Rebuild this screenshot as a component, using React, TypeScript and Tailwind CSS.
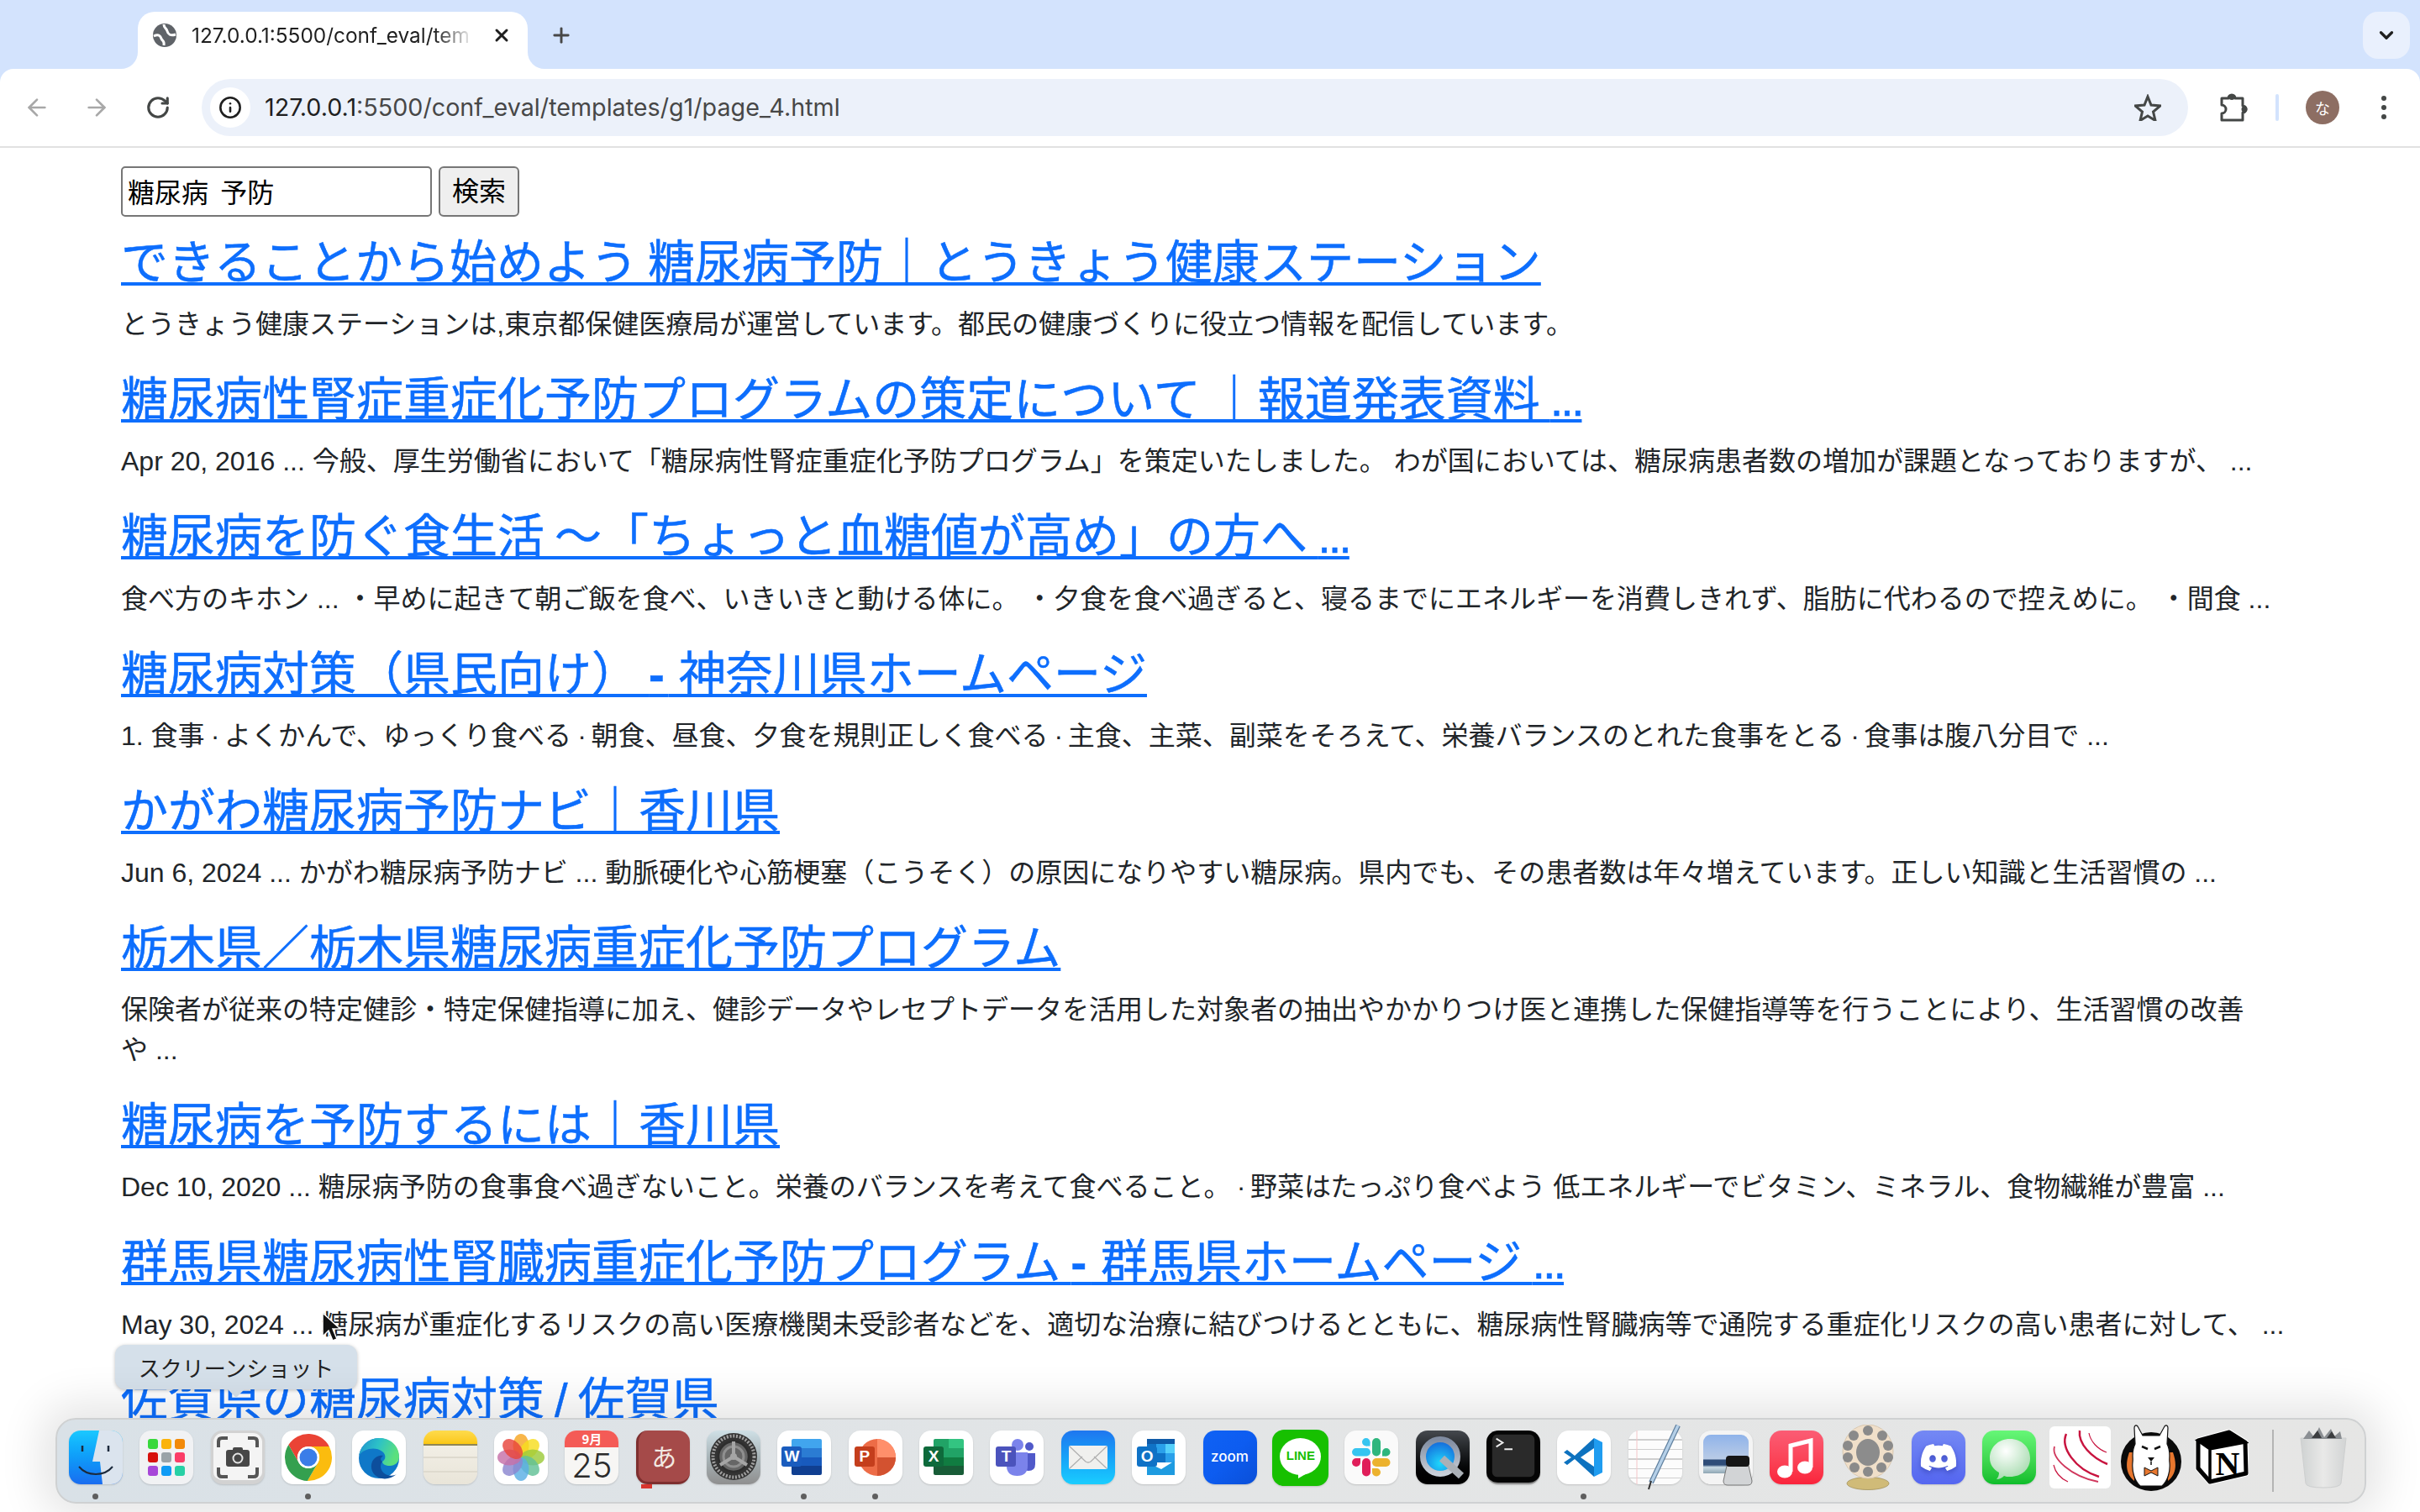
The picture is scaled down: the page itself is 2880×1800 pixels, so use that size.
import React from 'react';
import { ArrowLeft, ArrowRight, RotateCw, Info, Plus, X, ChevronDown } from 'lucide-react';
import { FaDiscord } from 'react-icons/fa';

const results = [
  {
    title: 'できることから始めよう 糖尿病予防｜とうきょう健康ステーション',
    text: 'とうきょう健康ステーションは,東京都保健医療局が運営しています。都民の健康づくりに役立つ情報を配信しています。',
  },
  {
    title: '糖尿病性腎症重症化予防プログラムの策定について ｜報道発表資料 ...',
    text: 'Apr 20, 2016 ... 今般、厚生労働省において「糖尿病性腎症重症化予防プログラム」を策定いたしました。 わが国においては、糖尿病患者数の増加が課題となっておりますが、 ...',
  },
  {
    title: '糖尿病を防ぐ食生活 ～「ちょっと血糖値が高め」の方へ ...',
    text: '食べ方のキホン ... ・早めに起きて朝ご飯を食べ、いきいきと動ける体に。 ・夕食を食べ過ぎると、寝るまでにエネルギーを消費しきれず、脂肪に代わるので控えめに。 ・間食 ...',
  },
  {
    title: '糖尿病対策（県民向け） - 神奈川県ホームページ',
    text: '1. 食事 · よくかんで、ゆっくり食べる · 朝食、昼食、夕食を規則正しく食べる · 主食、主菜、副菜をそろえて、栄養バランスのとれた食事をとる · 食事は腹八分目で ...',
  },
  {
    title: 'かがわ糖尿病予防ナビ｜香川県',
    text: 'Jun 6, 2024 ... かがわ糖尿病予防ナビ ... 動脈硬化や心筋梗塞（こうそく）の原因になりやすい糖尿病。県内でも、その患者数は年々増えています。正しい知識と生活習慣の ...',
  },
  {
    title: '栃木県／栃木県糖尿病重症化予防プログラム',
    text: '保険者が従来の特定健診・特定保健指導に加え、健診データやレセプトデータを活用した対象者の抽出やかかりつけ医と連携した保健指導等を行うことにより、生活習慣の改善\nや ...',
  },
  {
    title: '糖尿病を予防するには｜香川県',
    text: 'Dec 10, 2020 ... 糖尿病予防の食事食べ過ぎないこと。栄養のバランスを考えて食べること。 · 野菜はたっぷり食べよう 低エネルギーでビタミン、ミネラル、食物繊維が豊富 ...',
  },
  {
    title: '群馬県糖尿病性腎臓病重症化予防プログラム - 群馬県ホームページ ...',
    text: 'May 30, 2024 ... 糖尿病が重症化するリスクの高い医療機関未受診者などを、適切な治療に結びつけるとともに、糖尿病性腎臓病等で通院する重症化リスクの高い患者に対して、 ...',
  },
  { title: '佐賀県の糖尿病対策 / 佐賀県', text: '' },
];

const Tile = ({ className, children }: { className?: string; children?: React.ReactNode }) => (
  <div className={`relative w-[64px] h-[64px] rounded-[14px] overflow-hidden shrink-0 flex items-center justify-center shadow-[0_1px_2px_rgba(0,0,0,0.15)] ${className ?? ''}`}>{children}</div>
);

const Art = ({ children }: { children: React.ReactNode }) => (
  <svg viewBox="0 0 64 64" className="absolute inset-0 w-full h-full">{children}</svg>
);

const BadgeBox = ({ letter, className }: { letter: string; className: string }) => (
  <span className={`absolute left-[5px] top-[19px] w-[24px] h-[24px] rounded-[3px] text-white text-[19px] font-bold leading-[24px] text-center font-['Liberation_Sans',sans-serif] ${className}`}>{letter}</span>
);

const dockIcons: { key: string; dot?: boolean; node: React.ReactNode }[] = [
  {
    key: 'finder',
    dot: true,
    node: (
      <Tile className="bg-gradient-to-b from-[#1bc8ff] to-[#1a6cf0]">
        <Art>
          <path d="M36 0H64V64H40L37 37H28Z" fill="#dbe4ee" />
          <path d="M16 18v7M47 18v7" stroke="#1c2a3c" strokeWidth="2.500" />
          <path d="M12 43c10 12 30 12 40 0" fill="none" stroke="#1c2a3c" strokeWidth="2" />
        </Art>
      </Tile>
    ),
  },
  {
    key: 'launchpad',
    node: (
      <Tile className="bg-[#f1f2f4]">
        <div className="grid grid-cols-3 gap-[4px]">
          {['#39d83c', '#fbb30a', '#f28a0a', '#d7110d', '#9aa3a8', '#fb3d68', '#a746d8', '#0f9bf5', '#27d0a5'].map((c) => (
            <span key={c} className="w-[12px] h-[12px] rounded-[3px]" style={{ background: c }} />
          ))}
        </div>
      </Tile>
    ),
  },
  {
    key: 'screenshot',
    node: (
      <Tile className="bg-[#f4f4f4] border-[3px] border-b-[5px] border-[#d2d2d2]">
        <svg viewBox="0 0 64 64" className="absolute left-[-3px] top-[-3px] w-[64px] h-[64px]">
          <path d="M9 20v-7q0-4 4-4h7M44 9h7q4 0 4 4v7M55 44v7q0 4-4 4h-7M20 55h-7q-4 0-4-4v-7" fill="none" stroke="#555" strokeWidth="4" />
          <rect x="18" y="23" width="28" height="20" rx="3" fill="#474747" />
          <rect x="26" y="20" width="12" height="6" rx="2" fill="#474747" />
          <circle cx="32" cy="33" r="5.500" fill="none" stroke="#e5e5e5" strokeWidth="2" />
        </svg>
      </Tile>
    ),
  },
  {
    key: 'chrome',
    dot: true,
    node: (
      <Tile className="bg-white">
        <Art>
          <path d="M32 19H56.800A28 28 0 0 0 8.340 17.020L20.740 38.500A13 13 0 0 1 32 19Z" fill="#ea4335" />
          <path d="M43.260 38.500L30.860 59.980A28 28 0 0 0 56.800 19H32A13 13 0 0 1 43.260 38.500Z" fill="#fbbc0e" />
          <path d="M20.740 38.500L8.340 17.020A28 28 0 0 0 30.860 59.980L43.260 38.500A13 13 0 0 1 20.740 38.500Z" fill="#34a04f" />
          <circle cx="32" cy="32" r="13" fill="#fff" />
          <circle cx="32" cy="32" r="10.500" fill="#3b7de8" />
        </Art>
      </Tile>
    ),
  },
  {
    key: 'edge',
    node: (
      <Tile className="bg-white">
        <Art>
          <defs>
            <linearGradient id="edgeTop" x1="0" y1="0" x2="1" y2="0.300">
              <stop offset="0" stopColor="#1f8fce" />
              <stop offset="0.500" stopColor="#2cc1c8" />
              <stop offset="1" stopColor="#5be07d" />
            </linearGradient>
          </defs>
          <circle cx="32" cy="33" r="24" fill="#0f78c8" />
          <path d="M8 30C11 16 21 9 33 9c13 0 23 10 23 22 0 7-5 11-11 11-5 0-9-2-9-5 4-2 5-8 0-12-8-6-22-4-28 5z" fill="url(#edgeTop)" />
          <path d="M36 37c-4 5-2 13 6 16 4 1 8 1 11-1-6 5-14 7-21 4-8-3-11-12-8-19 3-6 9-8 13-7-3 2-4 5-1 7z" fill="#0d4e9c" />
        </Art>
      </Tile>
    ),
  },
  {
    key: 'notes',
    node: (
      <Tile className="bg-gradient-to-b from-[#f5f2ea] to-[#e9e5d9] flex-col justify-start">
        <div className="w-full h-[18px] shrink-0 bg-gradient-to-b from-[#fedb4b] to-[#fbc70d] border-b-2 border-[#8f8555]" />
        <div className="w-full h-[15px] shrink-0 border-b-2 border-[#dedace]" />
        <div className="w-full h-[17px] shrink-0 border-b-2 border-[#dedace]" />
      </Tile>
    ),
  },
  {
    key: 'photos',
    node: (
      <Tile className="bg-white">
        <Art>
          {([
            ['#f6a623', 0],
            ['#f7dd1e', 45],
            ['#9ccb3b', 90],
            ['#61c196', 135],
            ['#5aaee4', 180],
            ['#8b86cf', 225],
            ['#c670a8', 270],
            ['#e8453c', 315],
          ] as [string, number][]).map(([c, a]) => (
            <ellipse key={a} cx="32" cy="18" rx="9.500" ry="14" fill={c} opacity="0.82" transform={`rotate(${a} 32 32)`} />
          ))}
        </Art>
      </Tile>
    ),
  },
  {
    key: 'calendar',
    node: (
      <Tile className="bg-[#f7f6f4] flex-col justify-start">
        <div className="w-full h-[20px] shrink-0 bg-[#f45b56] text-white text-[15px] font-bold leading-[20px] text-center font-['Noto_Sans_CJK_JP',sans-serif]">9月</div>
        <div className="text-[#2b2b2b] text-[40px] leading-[43px] font-light font-['Inter',sans-serif]">25</div>
      </Tile>
    ),
  },
  {
    key: 'dict',
    node: (
      <div className="relative">
        <Tile className="bg-[#a54a49] border-l-[3px] border-b-[3px] border-[#7e2f2f] text-[#f2e9e2] text-[30px] font-['Noto_Sans_CJK_JP',sans-serif]">あ</Tile>
        <span className="absolute left-[6px] -bottom-[5px] w-[13px] h-[5px] bg-[#d8352e]" />
      </div>
    ),
  },
  {
    key: 'settings',
    node: (
      <Tile className="bg-gradient-to-b from-[#cfe0e6] via-[#a8b4b8] to-[#8f8f8f]">
        <Art>
          <circle cx="32" cy="31" r="28" fill="#333" />
          <circle cx="32" cy="31" r="24.500" fill="none" stroke="#a0a0a0" strokeWidth="4" strokeDasharray="2 1.800" />
          <circle cx="32" cy="31" r="18" fill="#666" stroke="#2d2d2d" strokeWidth="2.500" />
          <circle cx="32" cy="31" r="12" fill="none" stroke="#8f8f8f" strokeWidth="3" />
          <path d="M32 31V13M32 31L16 41M32 31l16 10" stroke="#a5a5a5" strokeWidth="4" />
          <circle cx="32" cy="31" r="4" fill="#a5a5a5" />
        </Art>
      </Tile>
    ),
  },
  {
    key: 'word',
    dot: true,
    node: (
      <Tile className="bg-white">
        <div className="absolute left-[17px] top-[10px] w-[36px] h-[43px] rounded-[2px] overflow-hidden flex flex-col">
          <span className="flex-1 bg-[#41a5ee]" />
          <span className="flex-1 bg-[#2b7cd3]" />
          <span className="flex-1 bg-[#185abd]" />
          <span className="flex-1 bg-[#103f91]" />
        </div>
        <BadgeBox letter="W" className="bg-[#1a5cbe]" />
      </Tile>
    ),
  },
  {
    key: 'powerpoint',
    dot: true,
    node: (
      <Tile className="bg-white">
        <Art>
          <circle cx="34" cy="32" r="22" fill="#ed6c47" />
          <path d="M34 10a22 22 0 0 1 22 22H34z" fill="#ff8f6b" />
          <path d="M34 32h22a22 22 0 0 1-22 22z" fill="#d35230" />
        </Art>
        <BadgeBox letter="P" className="left-[7px] bg-[#c43e1c]" />
      </Tile>
    ),
  },
  {
    key: 'excel',
    node: (
      <Tile className="bg-white">
        <div className="absolute left-[17px] top-[10px] w-[36px] h-[43px] rounded-[2px] overflow-hidden grid grid-cols-2 grid-rows-4">
          <span className="bg-[#21a366]" /><span className="bg-[#33c481]" />
          <span className="bg-[#21a366]" /><span className="bg-[#21a366]" />
          <span className="bg-[#107c41]" /><span className="bg-[#107c41]" />
          <span className="bg-[#185c37]" /><span className="bg-[#185c37]" />
        </div>
        <BadgeBox letter="X" className="bg-[#0e6a3b]" />
      </Tile>
    ),
  },
  {
    key: 'teams',
    node: (
      <Tile className="bg-white">
        <Art>
          <circle cx="47" cy="19" r="5" fill="#5059c9" />
          <path d="M38 27h16v13q0 8-8 8t-8-8z" fill="#5059c9" />
          <circle cx="33" cy="17" r="7" fill="#7b83eb" />
          <path d="M20 26h25v16q0 12-12.500 12T20 42z" fill="#7b83eb" />
        </Art>
        <BadgeBox letter="T" className="left-[7px] bg-[#4b53bc]" />
      </Tile>
    ),
  },
  {
    key: 'mail',
    node: (
      <Tile className="bg-gradient-to-b from-[#1f76ef] to-[#1bcdff]">
        <Art>
          <rect x="9" y="18" width="46" height="28" rx="2" fill="#f0f0ee" />
          <path d="M10 19l19 18q3 2 6 0l19-18M10 45l15-14M54 45L39 31" fill="none" stroke="#b0b0b0" strokeWidth="1.300" />
        </Art>
      </Tile>
    ),
  },
  {
    key: 'outlook',
    node: (
      <Tile className="bg-white">
        <Art>
          <rect x="18" y="10" width="33" height="8" fill="#0f5aa8" />
          <rect x="18" y="16" width="11" height="11" fill="#0f72c6" />
          <rect x="29" y="16" width="11" height="11" fill="#2aa0ea" />
          <rect x="40" y="16" width="11" height="11" fill="#55d0fa" />
          <rect x="18" y="27" width="11" height="11" fill="#0f5aa8" />
          <rect x="29" y="27" width="11" height="11" fill="#0f72c6" />
          <rect x="40" y="27" width="11" height="11" fill="#2aa0ea" />
          <path d="M18 38l17 8 16-10v17H18z" fill="#1e9be0" />
        </Art>
        <BadgeBox letter="O" className="left-[6px] w-[23px] bg-[#0f72c6]" />
      </Tile>
    ),
  },
  {
    key: 'zoom',
    node: (
      <Tile className="bg-gradient-to-br from-[#0f62f5] via-[#0d5cf0] to-[#0a4fd8] text-white text-[17px] font-medium font-['Inter',sans-serif]">zoom</Tile>
    ),
  },
  {
    key: 'line',
    node: (
      <Tile className="bg-[#17c000] w-[67px] h-[67px]">
        <svg viewBox="0 0 67 67" className="absolute inset-0 w-full h-full">
          <ellipse cx="33.500" cy="32" rx="24.500" ry="22" fill="#fff" />
          <path d="M31 50v8l12-7z" fill="#fff" />
        </svg>
        <span className="relative -mt-[3px] text-[#17c000] text-[15px] font-bold font-['Liberation_Sans',sans-serif]">LINE</span>
      </Tile>
    ),
  },
  {
    key: 'slack',
    node: (
      <Tile className="bg-[#fafafa]">
        <Art>
          <rect x="9" y="21" width="22" height="9.500" rx="4.700" fill="#36c5f0" />
          <rect x="21" y="9" width="9.500" height="9.500" rx="4.700" fill="#36c5f0" />
          <rect x="26" y="14" width="4.500" height="4.500" fill="#36c5f0" />
          <rect x="33" y="9" width="10" height="21.500" rx="5" fill="#2eb67d" />
          <rect x="45" y="21" width="9.500" height="9.500" rx="4.700" fill="#2eb67d" />
          <rect x="45" y="26" width="4.500" height="4.500" fill="#2eb67d" />
          <rect x="33" y="33" width="21.500" height="10" rx="5" fill="#ecb22e" />
          <rect x="33" y="45" width="10" height="9.500" rx="4.700" fill="#ecb22e" />
          <rect x="33" y="45" width="5" height="4.500" fill="#ecb22e" />
          <rect x="21" y="33" width="10" height="21.500" rx="5" fill="#e01e5a" />
          <rect x="9" y="33" width="10" height="10" rx="5" fill="#e01e5a" />
          <rect x="14" y="33" width="5" height="5" fill="#e01e5a" />
        </Art>
      </Tile>
    ),
  },
  {
    key: 'quicktime',
    node: (
      <Tile className="bg-gradient-to-b from-[#45494e] to-[#000]">
        <Art>
          <defs>
            <radialGradient id="qtBlue" cx="0.500" cy="0.700" r="0.700">
              <stop offset="0" stopColor="#1fd8fc" />
              <stop offset="1" stopColor="#1460d8" />
            </radialGradient>
            <linearGradient id="qtRing" x1="0" y1="0" x2="0" y2="1">
              <stop offset="0" stopColor="#7f8ba0" />
              <stop offset="1" stopColor="#c9d0d8" />
            </linearGradient>
          </defs>
          <circle cx="29" cy="31" r="20.500" fill="url(#qtBlue)" stroke="url(#qtRing)" strokeWidth="7" />
          <path d="M31 33L54 54" stroke="#aab0b6" strokeWidth="9" />
        </Art>
      </Tile>
    ),
  },
  {
    key: 'terminal',
    node: (
      <Tile className="w-[62px] h-[62px] bg-[#050505] border-b-2 border-[#8a8a8a]">
        <Art>
          <rect x="6" y="5" width="52" height="52" rx="6" fill="#2a2a2a" />
          <path d="M11 10l8 5-8 5" fill="none" stroke="#eee" strokeWidth="2" />
          <path d="M21 23h10" stroke="#eee" strokeWidth="2" />
        </Art>
      </Tile>
    ),
  },
  {
    key: 'vscode',
    dot: true,
    node: (
      <Tile className="bg-white">
        <Art>
          <path d="M44 9L21 30 12 23 8 26l9 6-9 6 4 3 9-7 23 21z" fill="#0d72bf" />
          <path d="M44 9l10 5v36l-10 5z" fill="#1f9cf0" />
          <path d="M44 21L28 32l16 11z" fill="#fff" />
        </Art>
      </Tile>
    ),
  },
  {
    key: 'textedit',
    node: (
      <div className="relative w-[64px] h-[64px]">
        <div className="w-full h-full rounded-[14px] bg-[repeating-linear-gradient(180deg,#fcfcfc_0px,#fcfcfc_10px,#cfcfcf_10px,#cfcfcf_11.500px)] shadow-[0_1px_2px_rgba(0,0,0,0.15)]" />
        <svg viewBox="0 0 64 80" className="absolute left-0 -top-[8px] w-[64px] h-[80px]">
          <path d="M10 8v64" stroke="#f4c6c8" strokeWidth="1" />
          <path d="M59 2L27 70" stroke="#5f7f9e" strokeWidth="6" />
          <path d="M59 2L27 70" stroke="#b5d0e8" strokeWidth="3.500" />
          <path d="M27 68l-3 10" stroke="#333" strokeWidth="2" />
        </svg>
      </div>
    ),
  },
  {
    key: 'preview',
    node: (
      <div className="relative w-[64px] h-[64px]">
        <div className="w-full h-full rounded-[14px] bg-[#f4f4f4] p-[5px] shadow-[0_1px_2px_rgba(0,0,0,0.2)]">
          <div className="w-full h-[46px] rounded-t-[9px] bg-[linear-gradient(180deg,#8fb3ea_0%,#b9cbe6_62%,#2f4d78_66%,#2f4d78_78%,#cbdce6_84%,#8ea5b3_100%)]" />
        </div>
        <svg viewBox="0 0 38 36" className="absolute left-[27px] top-[30px] w-[38px] h-[36px]">
          <path d="M6 12L2 30q0 5 5 5h24q5 0 5-5l-4-18z" fill="#d2d4d6" stroke="#777" strokeWidth="1" />
          <rect x="5" y="0" width="28" height="13" rx="4" fill="#161616" />
        </svg>
      </div>
    ),
  },
  {
    key: 'music',
    node: (
      <Tile className="bg-gradient-to-b from-[#fb5c74] to-[#fa233b]">
        <Art>
          <path d="M25 49V18l24-6v32" fill="none" stroke="#fff" strokeWidth="5" />
          <ellipse cx="18" cy="49" rx="9" ry="7.500" fill="#fff" />
          <ellipse cx="42" cy="44" rx="9" ry="7.500" fill="#fff" />
        </Art>
      </Tile>
    ),
  },
  {
    key: 'speaker',
    node: (
      <svg viewBox="0 0 64 78" className="w-[64px] h-[78px] shrink-0">
        <rect x="26" y="60" width="12" height="8" fill="#b7a468" />
        <ellipse cx="32" cy="70" rx="25" ry="7.500" fill="#d0bb78" stroke="#a2905a" strokeWidth="0.800" />
        <ellipse cx="32" cy="32" rx="30" ry="32" fill="#f0dfc9" stroke="#d8c7b0" />
        <ellipse cx="32" cy="33" rx="14" ry="16" fill="#8c8c8c" />
        {[[32, 7], [15, 13], [49, 13], [8, 25], [56, 25], [8, 39], [56, 39], [16, 51], [48, 51], [32, 56]].map(([x, y]) => (
          <circle key={`${x}-${y}`} cx={x} cy={y} r="6" fill="#8a8a8a" />
        ))}
      </svg>
    ),
  },
  {
    key: 'discord',
    node: (
      <Tile className="bg-gradient-to-b from-[#7488f4] to-[#5566f0]">
        <FaDiscord className="w-[46px] h-[46px] text-white drop-shadow-[0_3px_3px_rgba(40,50,160,0.5)]" />
      </Tile>
    ),
  },
  {
    key: 'messages',
    node: (
      <Tile className="bg-gradient-to-b from-[#66f777] to-[#0cbd2a]">
        <Art>
          <defs>
            <radialGradient id="bubble" cx="0.400" cy="0.300" r="0.800">
              <stop offset="0" stopColor="#ffffff" />
              <stop offset="1" stopColor="#9fd8a8" />
            </radialGradient>
          </defs>
          <path d="M33 10c14 0 24 10 24 23S47 55 33 55c-3 0-5 0-7-1-2 2-5 4-9 4 2-2 3-5 3-8-7-4-11-10-11-17 0-13 10-23 24-23z" fill="url(#bubble)" />
        </Art>
      </Tile>
    ),
  },
  {
    key: 'redlines',
    node: (
      <div className="w-[73px] h-[74px] rounded-[6px] bg-white overflow-hidden shrink-0">
        <svg viewBox="0 0 73 74" className="w-full h-full" fill="none" stroke="#c8143f">
          <path d="M20 9c-7 16 10 42 39 51" strokeWidth="2.500" />
          <path d="M36 5c-2 16 14 32 33 40" strokeWidth="2.500" />
          <path d="M47 8c2 10 10 19 21 23" strokeWidth="1.200" />
          <path d="M6 24c-4 14 20 36 52 42" strokeWidth="1.800" opacity="0.850" />
          <path d="M5 46c2 9 8 16 17 20" strokeWidth="1.200" />
        </svg>
      </div>
    ),
  },
  {
    key: 'ollama',
    node: (
      <svg viewBox="0 0 72 80" className="w-[72px] h-[80px] shrink-0">
        <ellipse cx="36" cy="45" rx="36" ry="35" fill="#0a0a0a" />
        <path d="M10 34c-5 14-4 26 6 34 0-8-2-12 3-20l-3 2c0-6 0-10 0-16zM62 34c5 14 4 26-6 34 0-8 2-12-3-20l3 2c0-6 0-10 0-16z" fill="#e8772e" />
        <path d="M17 24L16 5c0-3 2-4 4-2l6 11h20l6-11c2-2 4-1 4 2l-1 19c5 10 2 16 3 22 1 10-2 22-9 28H23c-7-6-10-18-9-28 1-6-2-12 3-22z" fill="#fff" stroke="#111" strokeWidth="1.200" />
        <path d="M25 27l7 3M47 27l-7 3" stroke="#111" strokeWidth="2.500" />
        <path d="M32 40h8l-4 5z" fill="#111" />
        <path d="M36 45v4" stroke="#111" strokeWidth="1.500" />
        <path d="M28 52l8 4 8-4v10l-8-4-8 4z" fill="#e8772e" stroke="#111" />
      </svg>
    ),
  },
  {
    key: 'notion',
    node: (
      <svg viewBox="0 0 64 68" className="w-[64px] h-[68px] shrink-0">
        <path d="M4 14L41 4l19 12 1 37-43 10L4 47z" fill="#fff" stroke="#fff" strokeWidth="7" strokeLinejoin="round" />
        <path d="M4 14L41 4l19 12 1 37-43 10L4 47z" fill="#fff" stroke="#000" strokeWidth="5" strokeLinejoin="round" />
        <path d="M4 14l14 10 42-8-19-10zM18 24v39" fill="#000" stroke="#000" strokeWidth="3.500" />
        <text x="39" y="55" fontSize="40" fontWeight="700" textAnchor="middle" fontFamily="Liberation Serif, serif">N</text>
      </svg>
    ),
  },
];

const Dock = () => (
  <div className="absolute left-[66px] top-[1688px] w-[2750px] h-[102px] rounded-[24px] border-2 border-[#cfd1d2] bg-gradient-to-r from-[#d9e1e7] via-[#e3e5e6] to-[#e6e6e5] shadow-[0_0_50px_18px_rgba(0,0,0,0.1)] flex items-start pl-[14px] pt-[13px] gap-[20.35px]">
    {dockIcons.map((i) => (
      <div key={i.key} className="relative w-[64px] h-[64px] shrink-0 flex items-center justify-center">
        {i.node}
        {i.dot && <span className="absolute left-[28px] top-[75px] w-[7px] h-[7px] rounded-full bg-[#5e5e5e]" />}
      </div>
    ))}
    <span className="ml-[7px] -mt-px w-[2px] h-[74px] bg-[#b4b4b4] shrink-0" />
    <svg viewBox="0 0 58 74" className="ml-[10px] -mt-[5px] w-[58px] h-[74px] shrink-0">
      <defs>
        <linearGradient id="cup" x1="0" y1="0" x2="1" y2="0">
          <stop offset="0" stopColor="#cfd2d2" />
          <stop offset="0.500" stopColor="#e9e9e8" />
          <stop offset="1" stopColor="#d2d4d4" />
        </linearGradient>
      </defs>
      <path d="M2 14l6 54q1 5 21 5t21-5l6-54z" fill="url(#cup)" stroke="#cdcfcf" />
      <path d="M5 15l7-10 6 8 6-12 6 12 8-10 4 9 7-6 2 9z" fill="#8b8f93" />
      <path d="M15 14l7-9 5 9zM33 14l6-8 5 8z" fill="#3c3e40" />
    </svg>
  </div>
);

const Heading = ({ text }: { text: string }) => (
  <>
    {text.split(/(-|\.\.\.)/).map((p, i) => {
      if (i % 2 === 0) return p;
      return <span key={i} className={p === '...' ? 'tracking-[-3px]' : 'font-bold tracking-[5px]'}>{p}</span>;
    })}
  </>
);

const Snippet = ({ text }: { text: string }) => (
  <>
    {text.split(' · ').map((p, i) => (
      <React.Fragment key={i}>
        {i > 0 && <span className="tracking-[-1.700px]">{' · '}</span>}
        {p}
      </React.Fragment>
    ))}
  </>
);

export default function App() {
  return (
    <div className="relative w-[2880px] h-[1800px] overflow-hidden bg-white font-['Liberation_Sans','Noto_Sans_CJK_JP',sans-serif]">
      <header className="bg-[#d3e3fd] font-['Inter','Noto_Sans_CJK_JP',sans-serif]">
        {/* tab strip */}
        <div className="h-[82px] flex items-end pl-[164px]">
          <div className="relative w-[464px] h-[68px] bg-white rounded-t-[20px] flex items-start pt-[14px] pl-[18px] text-[#1f1f1f]">
            <svg viewBox="0 0 20 20" className="absolute -left-[20px] bottom-0 w-[20px] h-[20px]"><path d="M20 0V20H0A20 20 0 0 0 20 0Z" fill="#fff" /></svg>
            <svg viewBox="0 0 20 20" className="absolute -right-[20px] bottom-0 w-[20px] h-[20px]"><path d="M0 0V20H20A20 20 0 0 1 0 0Z" fill="#fff" /></svg>
            <svg viewBox="0 0 28 28" className="w-[28px] h-[28px] shrink-0">
              <circle cx="14" cy="14" r="14" fill="#5f6368" />
              <path d="M1 15c6-3 8 0 9 3s4 2 3 8M27 13c-6 2-9 0-10-4s-4-3-4-8" fill="none" stroke="#fff" strokeWidth="3" />
            </svg>
            <span className="ml-[18px] w-[336px] h-[28px] text-[24.400px] leading-[28px] whitespace-nowrap overflow-hidden [mask-image:linear-gradient(90deg,#000_86%,transparent)]">127.0.0.1:5500/conf_eval/tem</span>
            <X className="ml-[21px] mt-[2px] w-[24px] h-[24px] text-[#1f1f1f]" strokeWidth={3} />
          </div>
          <Plus className="ml-[26px] mb-[26px] w-[28px] h-[28px] text-[#474747]" strokeWidth={2.5} />
          <div className="ml-auto mr-[12px] mb-[12px] w-[56px] h-[56px] rounded-[18px] bg-[#e9f0fd] flex items-center justify-center">
            <ChevronDown className="w-[26px] h-[26px] text-[#1f1f1f]" strokeWidth={3} />
          </div>
        </div>
        {/* toolbar */}
        <div className="h-[94px] bg-white rounded-t-[16px] border-b-2 border-[#e1e1e1] flex items-center">
          <ArrowLeft className="ml-[28px] w-[32px] h-[32px] text-[#a8a8a8]" strokeWidth={2} />
          <ArrowRight className="ml-[39px] w-[32px] h-[32px] text-[#a8a8a8]" strokeWidth={2} />
          <RotateCw className="ml-[42px] w-[30px] h-[30px] text-[#444746]" strokeWidth={2.5} />
          <div className="ml-[37px] w-[2364px] h-[68px] rounded-[34px] bg-[#ecf1fa] flex items-center pl-[10px] pr-[32px]">
            <span className="w-[48px] h-[48px] rounded-full bg-white flex items-center justify-center">
              <Info className="w-[28px] h-[28px] text-[#1f1f1f]" strokeWidth={2.2} />
            </span>
            <span className="ml-[17px] text-[28.700px] text-[#474747]"><span className="text-[#1f1f1f]">127.0.0.1</span>:5500/conf_eval/templates/g1/page_4.html</span>
            <svg viewBox="0 0 32 32" className="ml-auto w-[32px] h-[32px]">
              <path d="M16 3l4 10 11 1-8.500 7 2.500 10.500L16 26l-9 5.500L9.500 21 1 14l11-1z" fill="none" stroke="#444746" strokeWidth="3" />
            </svg>
          </div>
          <svg viewBox="0 0 36 36" className="ml-[36px] w-[36px] h-[36px]">
            <path d="M4 7H12A4 4 0 0 1 20 7H29V16A4 4 0 0 1 29 24V33H4V25A5 5 0 0 0 4 15Z" fill="#fff" stroke="#444746" strokeWidth="3" strokeLinejoin="round" />
            <circle cx="16" cy="5.500" r="3.500" fill="#444746" />
            <circle cx="31" cy="20" r="3.500" fill="#444746" />
          </svg>
          <span className="ml-[32px] w-[4px] h-[32px] rounded bg-[#d3e3fd]" />
          <span className="ml-[32px] w-[40px] h-[40px] rounded-full bg-[#8d6e63] text-white text-[18px] flex items-center justify-center font-['Noto_Sans_CJK_JP',sans-serif]">な</span>
          <div className="ml-[50px] flex flex-col gap-[5px]">
            <span className="w-[6px] h-[6px] rounded-full bg-[#444746]" />
            <span className="w-[6px] h-[6px] rounded-full bg-[#444746]" />
            <span className="w-[6px] h-[6px] rounded-full bg-[#444746]" />
          </div>
        </div>
      </header>
      {/* page */}
      <main className="px-[144px] pt-[22px] text-[#212529]">
        <form className="flex items-center gap-[8px] text-black">
          <input
            readOnly
            value="糖尿病  予防"
            className="w-[370px] h-[60px] border-2 border-[#767676] rounded-[5px] pl-[6px] pr-[8px] pb-[3px] text-[32px] text-black font-['Noto_Sans_CJK_JP',sans-serif]"
          />
          <button type="button" className="w-[96px] h-[60px] border-2 border-[#767676] rounded-[6px] bg-[#efefef] text-[32px]">検索</button>
        </form>
        <ul className="mt-[21px]">
          {results.map((r) => (
            <li key={r.title}>
              <a href="#" className="block text-[56px] leading-[67.2px] [word-spacing:-3.500px] [-webkit-text-stroke:0.500px_#0d6efd] text-[#0d6efd] underline decoration-[4px] underline-offset-[4px]">
                <Heading text={r.title} />
              </a>
              {r.text && (
                <p className="mt-[16px] mb-[32px] text-[32px] leading-[48px] whitespace-pre-line">
                  <Snippet text={r.text} />
                </p>
              )}
            </li>
          ))}
        </ul>
      </main>
      {/* tooltip & cursor */}
      <div className="absolute left-[137px] top-[1601px] w-[288px] h-[53px] rounded-[12px] bg-[#d5e0ea] shadow-[0_1px_4px_rgba(0,0,0,0.25)] flex items-center justify-center text-[26px] text-[#222] font-['Noto_Sans_CJK_JP',sans-serif]">
        スクリーンショット
        <span className="absolute left-1/2 -translate-x-1/2 -bottom-[7px] w-[14px] h-[14px] rotate-45 bg-[#d5e0ea]" />
      </div>
      <svg viewBox="0 0 24 38" className="absolute left-[382px] top-[1562px] w-[24px] h-[38px]">
        <path d="M2 1v28l7-7 5 12 5-2-5-12h9z" fill="#111" stroke="#fff" strokeWidth="1.500" />
      </svg>
      <Dock />
    </div>
  );
}
